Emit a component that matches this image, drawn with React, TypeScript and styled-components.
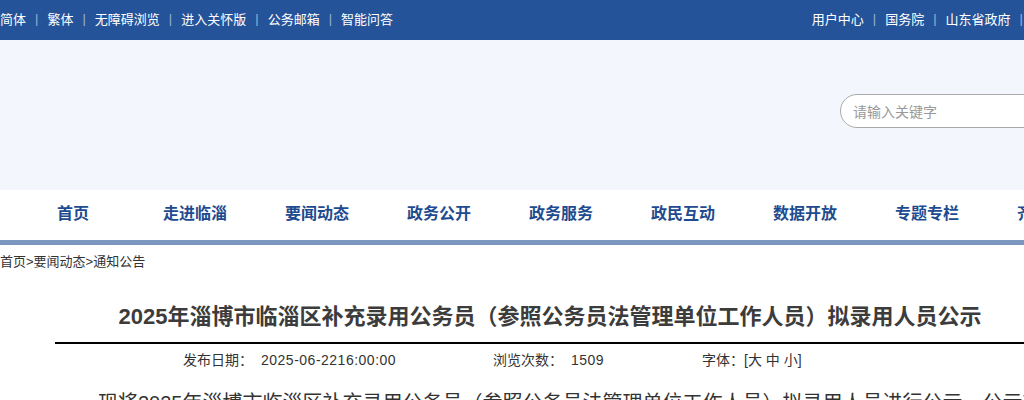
import React from "react";
import styled, { createGlobalStyle } from "styled-components";

const Global = createGlobalStyle`
  html, body { margin: 0; padding: 0; background: #fff; overflow: hidden; }
  body { font-family: "Liberation Sans", "Noto Sans CJK SC", sans-serif; color: #333; }
  * { box-sizing: border-box; }
`;

const Page = styled.div`
  width: 1120px;
`;

const TopBar = styled.div`
  height: 40px;
  background: #255399;
  display: flex;
  align-items: center;
  justify-content: space-between;
  padding-right: 36px;
  padding-bottom: 3px;
  font-size: 13px;
  color: #fff;
`;

const LinkGroup = styled.div`
  display: flex;
  align-items: center;
`;

const TopLink = styled.span`
  white-space: nowrap;
`;

const Sep = styled.span`
  margin: 0 9px;
  color: rgba(255, 255, 255, 0.55);
`;

const Header = styled.div`
  height: 150px;
  background: #f3f7fd;
  display: flex;
  align-items: center;
  justify-content: flex-start;
  padding-left: 840px;
  padding-bottom: 8px;
`;

const Search = styled.div`
  width: 260px;
  height: 34px;
  border: 1px solid #aaa;
  border-radius: 17px 0 0 17px;
  background: #fff;
  display: flex;
  align-items: center;
  padding-left: 12px;
  font-size: 14px;
  color: #999;
`;

const Nav = styled.div`
  background: #fff;
  display: flex;
  align-items: center;
  padding-left: 12px;
  padding-bottom: 6px;
  border-bottom: 5px solid #7b96bf;
  box-sizing: content-box;
  height: 44px;
`;

const NavItem = styled.div`
  width: 122px;
  flex: none;
  text-align: center;
  font-size: 16px;
  font-weight: bold;
  color: #1e4b8f;
  white-space: nowrap;
`;

const Crumb = styled.div`
  font-size: 13px;
  line-height: 20px;
  padding-top: 7px;
  color: #333;
`;

const Article = styled.div`
  margin-left: 55px;
  width: 990px;
`;

const Title = styled.h1`
  margin: 0;
  padding: 30px 0 10px;
  text-align: center;
  font-size: 22px;
  line-height: 30px;
  font-weight: bold;
  color: #3c3c3c;
  border-bottom: 2px solid #000;
`;

const Meta = styled.div`
  display: flex;
  padding-left: 128px;
  padding-top: 5px;
  font-size: 14px;
  line-height: 22px;
  color: #333;
`;

const MetaItem = styled.span<{ $w?: number }>`
  white-space: nowrap;
  flex: none;
  width: ${(p) => (p.$w ? `${p.$w}px` : "auto")};
`;

const MetaValue = styled.span`
  margin-left: 8px;
  letter-spacing: 0.5px;
`;

const Body = styled.p`
  margin: 14px 0 0 11px;
  font-size: 20px;
  line-height: 36px;
  text-indent: 32px;
  color: #333;
  white-space: nowrap;
`;

const left = ["简体", "繁体", "无障碍浏览", "进入关怀版", "公务邮箱", "智能问答"];
const right = ["用户中心", "国务院", "山东省政府", "网站导航"];
const nav = ["首页", "走进临淄", "要闻动态", "政务公开", "政务服务", "政民互动", "数据开放", "专题专栏", "齐都文化"];

const Links = ({ items }: { items: string[] }) => (
  <LinkGroup>
    {items.map((t, i) => (
      <React.Fragment key={t}>
        {i > 0 && <Sep>|</Sep>}
        <TopLink>{t}</TopLink>
      </React.Fragment>
    ))}
  </LinkGroup>
);

export default function App() {
  return (
    <Page>
      <Global />
      <TopBar>
        <Links items={left} />
        <Links items={right} />
      </TopBar>
      <Header>
        <Search>请输入关键字</Search>
      </Header>
      <Nav>
        {nav.map((n) => (
          <NavItem key={n}>{n}</NavItem>
        ))}
      </Nav>
      <Crumb>首页&gt;要闻动态&gt;通知公告</Crumb>
      <Article>
        <Title>2025年淄博市临淄区补充录用公务员（参照公务员法管理单位工作人员）拟录用人员公示</Title>
        <Meta>
          <MetaItem $w={310}>
            发布日期：<MetaValue>2025-06-2216:00:00</MetaValue>
          </MetaItem>
          <MetaItem $w={209}>
            浏览次数：<MetaValue>1509</MetaValue>
          </MetaItem>
          <MetaItem>字体：[大 中 小]</MetaItem>
        </Meta>
        <Body>现将2025年淄博市临淄区补充录用公务员（参照公务员法管理单位工作人员）拟录用人员进行公示，公示期5个工作日。</Body>
      </Article>
    </Page>
  );
}
